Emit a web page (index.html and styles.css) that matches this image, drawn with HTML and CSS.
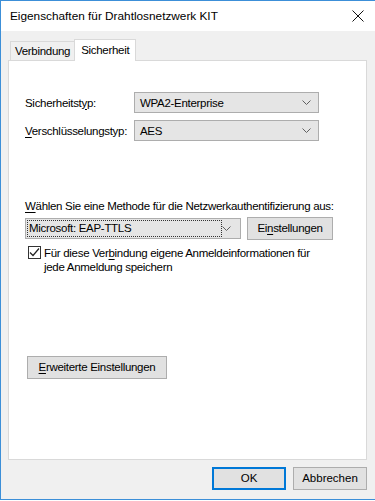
FILE: index.html
```html
<!DOCTYPE html>
<html lang="de">
<head>
  <meta charset="UTF-8">
  <title>Eigenschaften für Drahtlosnetzwerk KIT</title>
  <link rel="stylesheet" href="styles.css">
</head>
<body>
  <div class="window">
    <div class="titlebar">
      <span class="title">Eigenschaften für Drahtlosnetzwerk KIT</span>
      <svg class="close" width="12" height="12" viewBox="0 0 12 12">
        <path d="M0.5 0.5 L11.5 11.5 M11.5 0.5 L0.5 11.5" stroke="#111" stroke-width="1" fill="none"/>
      </svg>
    </div>

    <div class="content">
      <div class="tabs">
        <div class="tab">Verbindung</div>
        <div class="tab active">Sicherheit</div>
      </div>

      <div class="panel">
        <div class="row">
          <div class="label">Sicherheitst<u>y</u>p:</div>
          <div class="combo">
            <span>WPA2-Enterprise</span>
            <svg class="chev" width="9" height="5" viewBox="0 0 9 5"><path d="M0.5 0.5 L4.5 4.5 L8.5 0.5" stroke="#606060" fill="none"/></svg>
          </div>
        </div>
        <div class="row">
          <div class="label"><u>V</u>erschlüsselungstyp:</div>
          <div class="combo">
            <span>AES</span>
            <svg class="chev" width="9" height="5" viewBox="0 0 9 5"><path d="M0.5 0.5 L4.5 4.5 L8.5 0.5" stroke="#606060" fill="none"/></svg>
          </div>
        </div>

        <div class="method-label"><u>W</u>ählen Sie eine Methode für die Netzwerkauthentifizierung aus:</div>
        <div class="method-row">
          <div class="combo wide">
            <span class="focus">Microsoft: EAP-TTLS</span>
            <svg class="chev" width="9" height="5" viewBox="0 0 9 5"><path d="M0.5 0.5 L4.5 4.5 L8.5 0.5" stroke="#606060" fill="none"/></svg>
          </div>
          <div class="btn settings">Ei<u>n</u>stellungen</div>
        </div>

        <div class="check-row">
          <div class="checkbox">
            <svg width="11" height="11" viewBox="0 0 11 11"><path d="M1 5.5 L4 8.5 L10 1.5" stroke="#222" stroke-width="1.2" fill="none"/></svg>
          </div>
          <div class="check-text">Für diese Ver<u>b</u>indung eigene Anmeldeinformationen für<br>jede Anmeldung speichern</div>
        </div>

        <div class="btn advanced"><u>E</u>rweiterte Einstellungen</div>
      </div>

      <div class="footer">
        <div class="btn ok">OK</div>
        <div class="btn">Abbrechen</div>
      </div>
    </div>
  </div>
</body>
</html>
```

FILE: styles.css
```css
body {
  margin: 0;
  font-family: "Liberation Sans", Arial, sans-serif;
  font-size: 11.5px;
  color: #000;
  background: #fff;
}
u {
  text-decoration-thickness: 1px;
  text-underline-offset: 2px;
}
.window {
  box-sizing: border-box;
  width: 380px;
  height: 500px;
  border: 1px solid #3c8fd8;
  background: #f0f0f0;
}
.titlebar {
  display: flex;
  align-items: center;
  height: 30px;
  background: #fff;
  padding-left: 9px;
}
.title {
  font-size: 11.8px;
}
.close {
  margin-left: auto;
  margin-right: 15px;
}
.content {
  padding: 7px 0 0 7px;
}
.tabs {
  display: flex;
  align-items: flex-end;
  height: 22px;
  padding-left: 2px;
  letter-spacing: -0.3px;
}
.tab {
  box-sizing: border-box;
  height: 19px;
  padding: 0 4px;
  border: 1px solid #d9d9d9;
  border-bottom: none;
  background: #f0f0f0;
  line-height: 19px;
}
.active {
  height: 22px;
  margin-left: -1px;
  margin-bottom: -1px;
  padding: 0 6px;
  background: #fff;
  line-height: 20px;
  position: relative;
}
.panel {
  box-sizing: border-box;
  width: 359px;
  height: 400px;
  border: 1px solid #d9d9d9;
  background: #fff;
  padding: 31px 0 0 16px;
  letter-spacing: -0.3px;
}
.row {
  display: flex;
  align-items: center;
  height: 21px;
  margin-bottom: 7px;
}
.label {
  flex: none;
  width: 109px;
  white-space: nowrap;
}
.combo {
  flex: none;
  box-sizing: border-box;
  display: flex;
  align-items: center;
  width: 185px;
  height: 21px;
  padding: 0 7px 0 5px;
  background: #e5e5e5;
  border: 1px solid #adadad;
}
.chev {
  margin-left: auto;
}
.method-label {
  margin-top: 58px;
  margin-bottom: 3px;
  line-height: 15px;
  white-space: nowrap;
}
.method-row {
  display: flex;
  align-items: center;
}
.combo.wide {
  width: 216px;
  height: 21px;
  padding: 0 9px 0 1px;
}
.focus {
  box-sizing: border-box;
  width: 195px;
  height: 17px;
  line-height: 15px;
  padding-left: 1px;
  border: 1px dotted #333;
}
.btn {
  box-sizing: border-box;
  height: 23px;
  line-height: 21px;
  text-align: center;
  background: #e1e1e1;
  border: 1px solid #adadad;
}
.settings {
  width: 86px;
  margin-left: 6px;
}
.check-row {
  display: flex;
  margin-top: 6px;
  padding-left: 3px;
}
.checkbox {
  flex: none;
  box-sizing: border-box;
  width: 13px;
  height: 13px;
  border: 1px solid #333;
  background: #fff;
  display: flex;
  align-items: center;
  justify-content: center;
}
.check-text {
  margin-left: 3px;
  line-height: 14px;
}
.advanced {
  width: 140px;
  margin-top: 82px;
  margin-left: 2px;
}
.footer {
  display: flex;
  justify-content: flex-end;
  gap: 7px;
  padding: 7px 0 0 0;
  width: 359px;
}
.footer .btn {
  width: 74px;
}
.ok {
  border-color: #0078d7;
  box-shadow: inset 0 0 0 1px #0078d7;
}
```
